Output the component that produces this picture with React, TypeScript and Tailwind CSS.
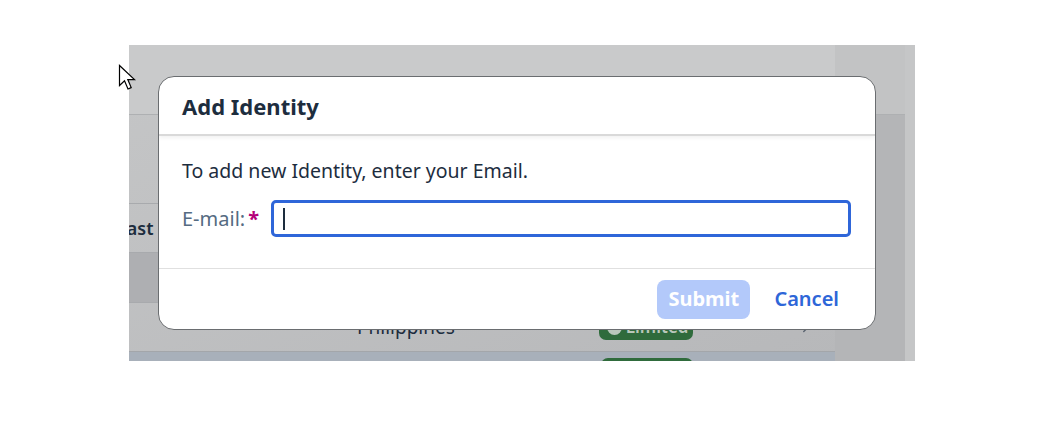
import { ChevronRight } from "lucide-react";

const font = { fontFamily: '"Noto Sans", "Liberation Sans", sans-serif' };

function Cursor() {
  return (
    <svg
      className="absolute left-[118px] top-[64px]"
      width="20"
      height="28"
      viewBox="0 0 20 28"
    >
      <path
        d="M1.5 1.5 L1.5 21.5 L6.5 16.8 L10 25 L13.2 23.6 L9.8 15.6 L16.5 15.6 Z"
        fill="#ffffff"
        stroke="#000000"
        strokeWidth="1.2"
        strokeLinejoin="miter"
      />
    </svg>
  );
}

function Backdrop() {
  return (
    <div className="ml-[129px] mt-[45px] flex h-[316px] w-[786px] overflow-hidden text-[#1d2d3e]">
      <div className="flex w-[706px] flex-col bg-gradient-to-br from-[#c5c6c7] to-[#b7b8ba]">
        <div className="h-[70px] shrink-0 border-b border-[#aeb0b2] bg-[#c9cacb]" />
        <div className="h-[89px] shrink-0 border-b border-[#a8aaad]" />
        <div className="flex h-[49px] shrink-0 items-center border-b border-[#a8aaad]">
          <div className="w-[29px] overflow-hidden">
            <span className="-ml-[12px] block whitespace-nowrap text-[18px] font-semibold">Last</span>
          </div>
        </div>
        <div className="h-[50px] shrink-0 border-b border-[#a8aaad] bg-[#aeafb2]" />
        <div className="relative flex h-[49px] shrink-0 items-center border-b border-[#a3a6aa]">
          <span className="ml-[228px] text-[19px]">Philippines</span>
          <span className="ml-[144px] flex h-[25px] w-[94px] items-center gap-1 rounded-[7px] bg-[#2f6b3c] pl-2 text-[17px] font-semibold text-[#b9c7bb]">
            <span className="h-[15px] w-[15px] rounded-full bg-[#b9c7bb]" />
            Limited
          </span>
          <ChevronRight className="ml-[104px] h-[18px] w-[18px] text-[#5b6470]" />
        </div>
        <div className="flex h-[9px] shrink-0 items-start bg-[#a8b0ba] pt-[6px]">
          <span className="ml-[472px] h-[10px] w-[92px] rounded-t-[7px] bg-[#2f6b3c]" />
        </div>
      </div>
      <div className="flex w-[70px] flex-col bg-[#b4b5b7]">
        <div className="h-[70px] border-b border-[#aeb0b2] bg-[#c2c3c4]" />
      </div>
      <div className="w-[10px] bg-[#c5c6c7]" />
    </div>
  );
}

function Dialog() {
  return (
    <div className="absolute left-[158px] top-[76px] flex h-[254px] w-[718px] flex-col overflow-hidden rounded-[16px] border border-[#6a6d70] bg-white">
      <div className="flex h-[59px] shrink-0 items-center border-b-2 border-[#d9d9d9] px-[23px] pt-[2px] shadow-[0_2px_4px_rgba(0,0,0,0.06)]">
        <h1 className="text-[22px] font-bold text-[#1d2d3e]">Add Identity</h1>
      </div>
      <div className="flex flex-1 flex-col px-[23px] pt-[22px]">
        <p className="text-[19.5px] leading-[26px] text-[#1d2d3e]">To add new Identity, enter your Email.</p>
        <div className="mt-[16px] flex items-center">
          <div className="flex w-[89px] items-center">
            <label className="text-[20px] text-[#556b82]">E-mail:</label>
            <span className="ml-[3px] text-[20px] font-bold text-[#b5007a]">*</span>
          </div>
          <div className="flex h-[37px] w-[580px] items-center rounded-[5px] border-[3px] border-[#2f66d9] pl-[9px]">
            <span className="h-[22px] w-[2px] bg-[#1d2d3e]" />
          </div>
        </div>
      </div>
      <div className="flex h-[61px] shrink-0 items-center justify-end border-t border-[#e0e0e0] pr-[20px]">
        <button className="h-[39px] w-[93px] rounded-[8px] bg-[#b3c9fa] text-[20px] font-bold text-white">
          Submit
        </button>
        <button className="ml-[8px] h-[39px] px-[16px] text-[20px] font-semibold text-[#2e66d8]">
          Cancel
        </button>
      </div>
    </div>
  );
}

export default function App() {
  return (
    <div className="relative h-[428px] w-[1058px] overflow-hidden bg-white" style={font}>
      <Backdrop />
      <Dialog />
      <Cursor />
    </div>
  );
}
